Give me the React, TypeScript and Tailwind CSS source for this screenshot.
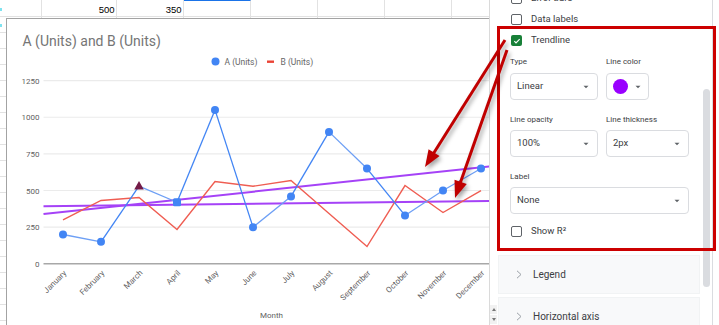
import React from "react"

const months = [
  "January", "February", "March", "April", "May", "June",
  "July", "August", "September", "October", "November", "December",
]
const seriesA = [200, 150, 530, 420, 1050, 250, 460, 900, 650, 330, 500, 650]
const seriesB = [300, 432, 452, 234, 561, 529, 568, 343, 118, 534, 350, 500]
// segments of A that render lighter in the reference
const lightSeg = [true, false, true, false, false, true, false, true, false, true, true]

const X = (i: number) => 63.5 + 38 * i
const Y = (v: number) => 264.3 - v * 0.14656

const colWidths = [42, 75, 67, 67, 67, 67, 67, 67]

// arrow head polygon, computed from start/tip
const arrowParts = (sx: number, sy: number, tx: number, ty: number) => {
  const dx = tx - sx
  const dy = ty - sy
  const len = Math.hypot(dx, dy)
  const ux = dx / len
  const uy = dy / len
  const bx = tx - 17 * ux
  const by = ty - 17 * uy
  const nx = -uy
  const ny = ux
  return {
    line: { x1: sx, y1: sy, x2: bx + 2 * ux, y2: by + 2 * uy },
    head: `${tx},${ty} ${bx + 6.5 * nx},${by + 6.5 * ny} ${bx - 6.5 * nx},${by - 6.5 * ny}`,
  }
}

const Checkbox = ({ checked }: { checked?: boolean }) =>
  checked ? (
    <div className="w-[11px] h-[11px] rounded-[2px] bg-[#188038] flex items-center justify-center shrink-0">
      <svg width="8" height="8" viewBox="0 0 24 24">
        <path d="M4 12.5l5 5L20 6.5" stroke="white" strokeWidth="3.5" fill="none" />
      </svg>
    </div>
  ) : (
    <div className="w-[11px] h-[11px] rounded-[2px] border-[1.5px] border-[#5f6368] shrink-0" />
  )

const Caret = () => (
  <svg width="6" height="4" viewBox="0 0 6 4" className="shrink-0">
    <path d="M0.5 0.8h5L3 3.3z" fill="#5f6368" />
  </svg>
)

const Select = ({ value, className }: { value: string; className: string }) => (
  <div className={`h-[27px] border border-[#dadce0] rounded-[4px] flex items-center justify-between pl-[6px] pr-[8px] text-[9.5px] text-[#3c4043] ${className}`}>
    <span>{value}</span>
    <Caret />
  </div>
)

const CheckRow = ({ label, checked }: { label: string; checked?: boolean }) => (
  <div className="h-[21px] shrink-0 flex items-center pl-[14px] gap-[9px] text-[9.5px] text-[#3c4043]">
    <Checkbox checked={checked} />
    <span>{label}</span>
  </div>
)

const Accordion = ({ label, className }: { label: string; className?: string }) => (
  <div className={`shrink-0 ml-[1px] w-[202px] h-[39px] bg-[#f8f9fa] border border-[#f1f3f4] flex items-center pl-[17px] gap-[11px] text-[10px] text-[#3c4043] ${className ?? ""}`}>
    <svg width="6" height="9" viewBox="0 0 6 9">
      <path d="M1 0.8L5 4.5L1 8.2" stroke="#9aa0a6" strokeWidth="1" fill="none" />
    </svg>
    <span>{label}</span>
  </div>
)

const Chart = () => {
  const a1 = { x1: 44, y1: 214.5, x2: 500, y2: 166 }
  const a2 = { x1: 44, y1: 206.8, x2: 500, y2: 201.4 }
  return (
    <div className="absolute left-[6px] top-[18px] w-[500px] h-[320px] border-l-[1.5px] border-t-[1.5px] border-[#a3a3a3] bg-white">
      <svg width="500" height="310" viewBox="7.5 19.5 500 310" fontFamily="Roboto, sans-serif">
        <text x="23" y="46" fontSize="14" fill="#757575">A (Units) and B (Units)</text>

        {/* legend */}
        <circle cx="216" cy="62" r="4" fill="#4285f4" />
        <text x="225" y="65" fontSize="8.5" fill="#666">A (Units)</text>
        <rect x="267.5" y="61" width="7" height="2.4" fill="#ea4335" />
        <text x="281" y="65" fontSize="8.5" fill="#666">B (Units)</text>

        {/* grid */}
        {[250, 500, 750, 1000, 1250].map((v) => (
          <line key={v} x1="44" x2="500" y1={Y(v)} y2={Y(v)} stroke="#ebebeb" strokeWidth="1.2" />
        ))}
        <line x1="44" x2="500" y1={Y(0)} y2={Y(0)} stroke="#a8a8a8" strokeWidth="1.6" />
        {[0, 250, 500, 750, 1000, 1250].map((v) => (
          <text key={v} x="40" y={Y(v) + 3} fontSize="8" fill="#5f5f5f" textAnchor="end">{v}</text>
        ))}

        {/* trendlines */}
        <line {...a1} stroke="#a542f7" strokeWidth="2" />
        <line {...a2} stroke="#a542f7" strokeWidth="2" />

        {/* series B */}
        <polyline
          points={seriesB.map((v, i) => `${X(i)},${Y(v)}`).join(" ")}
          fill="none"
          stroke="#ef5d52"
          strokeWidth="1.4"
        />

        {/* series A */}
        {seriesA.slice(0, -1).map((v, i) => (
          <line
            key={i}
            x1={X(i)}
            y1={Y(v)}
            x2={X(i + 1)}
            y2={Y(seriesA[i + 1])}
            stroke={lightSeg[i] ? "#6d9ff5" : "#4285f4"}
            strokeWidth="1.3"
          />
        ))}
        {seriesA.map((v, i) => {
          if (i === 2)
            return (
              <polygon
                key={i}
                points={`${X(i)},${Y(v) - 5} ${X(i) + 4.8},${Y(v) + 3.3} ${X(i) - 4.8},${Y(v) + 3.3}`}
                fill="#741b47"
              />
            )
          if (i === 3)
            return <rect key={i} x={X(i) - 4} y={Y(v) - 4} width="8" height="8" rx="1.5" fill="#4285f4" />
          return <circle key={i} cx={X(i)} cy={Y(v)} r="4" fill="#4285f4" />
        })}

        {/* x labels */}
        {months.map((m, i) => (
          <text
            key={m}
            x={X(i) + 4}
            y={274}
            fontSize="8"
            fill="#5f5f5f"
            textAnchor="end"
            transform={`rotate(-45 ${X(i) + 4} 274)`}
          >
            {m}
          </text>
        ))}
        <text x="272" y="318" fontSize="8" fill="#5f5f5f" textAnchor="middle">Month</text>
      </svg>
    </div>
  )
}

const Sheet = () => (
  <div className="relative w-[490px] h-full overflow-hidden border-r border-[#dadada] bg-white">
    <div className="flex flex-col">
      {Array.from({ length: 21 }).map((_, r) => (
        <div key={r} className={`shrink-0 flex border-b border-[#e2e2e2] ${r === 0 ? "h-[17px]" : "h-[16px]"}`}>
          {colWidths.map((w, c) => (
            <div
              key={c}
              style={{ width: w }}
              className={`shrink-0 h-full border-r border-[#e2e2e2] flex items-end justify-end pr-[1.5px] pb-[2px] text-[9.5px] leading-none text-black font-['Liberation_Sans',Arial,sans-serif] ${
                r === 0 && c === 3 ? "border-t border-t-[#1a73e8]" : ""
              }`}
            >
              {r === 0 && c === 1 && "500"}
              {r === 0 && c === 2 && "350"}
              {c === 0 && r < 2 && <div className="mr-auto mb-[3px] w-[2px] h-[3px] bg-[#7fe3f0]" />}
            </div>
          ))}
        </div>
      ))}
    </div>
    <Chart />
  </div>
)

const Panel = () => (
  <div className="w-[222px] h-full flex bg-white">
    <div className="w-[215px] h-full flex overflow-hidden">
      <div className="w-[206px] flex flex-col">
        <div className="mt-[-12px] shrink-0">
          <CheckRow label="Error bars" />
          <CheckRow label="Data labels" />
          <CheckRow label="Trendline" checked />
        </div>
        <div className="shrink-0 pl-[13px] text-[8px] text-[#3c4043]">
          <div className="mt-[5px] flex h-[11px] items-center">
            <span className="w-[96px]">Type</span>
            <span>Line color</span>
          </div>
          <div className="mt-[6px] flex gap-[8px]">
            <Select value="Linear" className="w-[88px]" />
            <div className="w-[43px] h-[27px] border border-[#dadce0] rounded-[4px] flex items-center pl-[6px] gap-[7px]">
              <div className="w-[15px] h-[15px] rounded-full bg-[#9900ff]" />
              <Caret />
            </div>
          </div>
          <div className="mt-[14px] flex h-[11px] items-center">
            <span className="w-[96px]">Line opacity</span>
            <span>Line thickness</span>
          </div>
          <div className="mt-[5px] flex gap-[8px]">
            <Select value="100%" className="w-[88px]" />
            <Select value="2px" className="w-[83px]" />
          </div>
          <div className="mt-[14px] h-[11px] flex items-center">Label</div>
          <div className="mt-[5px]">
            <Select value="None" className="w-[179px]" />
          </div>
        </div>
        <div className="mt-[7px] shrink-0">
          <CheckRow label="Show R²" />
        </div>
        <Accordion label="Legend" className="mt-[13px]" />
        <Accordion label="Horizontal axis" className="mt-[3px]" />
      </div>
      <div className="w-[7px] pt-[89px]">
        <div className="w-[7px] h-[198px] rounded-full bg-[#dadce0]" />
      </div>
    </div>
    <div className="w-[7px] h-full border-l border-[#dadce0]" />
  </div>
)

const Annotations = () => {
  const p1 = arrowParts(505, 40, 425, 167)
  const p2 = arrowParts(507, 50, 455, 198)
  return (
    <>
      <div className="absolute left-[497px] top-[26px] w-[219px] h-[225px] border-[3px] border-[#cc0000] pointer-events-none" />
      <svg
        className="absolute inset-0 pointer-events-none drop-shadow-[2px_3px_2px_rgba(0,0,0,0.35)]"
        width="719"
        height="325"
      >
        {[p1, p2].map((p, i) => (
          <g key={i}>
            <line {...p.line} stroke="#c00000" strokeWidth="3" />
            <polygon points={p.head} fill="#c00000" />
          </g>
        ))}
      </svg>
    </>
  )
}

const App = () => {
  return (
    <div className="relative w-[719px] h-[325px] flex overflow-hidden bg-white font-['Roboto',sans-serif]">
      <Sheet />
      <div className="w-[7px] h-full flex flex-col justify-end pb-[1px]">
        <div className="h-[9px] bg-[#f1f1f1] flex items-center justify-center">
          <svg width="4" height="3" viewBox="0 0 4 3"><path d="M0 3h4L2 0z" fill="#777" /></svg>
        </div>
        <div className="mt-[1px] h-[9px] bg-[#f1f1f1] flex items-center justify-center">
          <svg width="4" height="3" viewBox="0 0 4 3"><path d="M0 0h4L2 3z" fill="#777" /></svg>
        </div>
      </div>
      <Panel />
      <Annotations />
    </div>
  )
}

export default App
